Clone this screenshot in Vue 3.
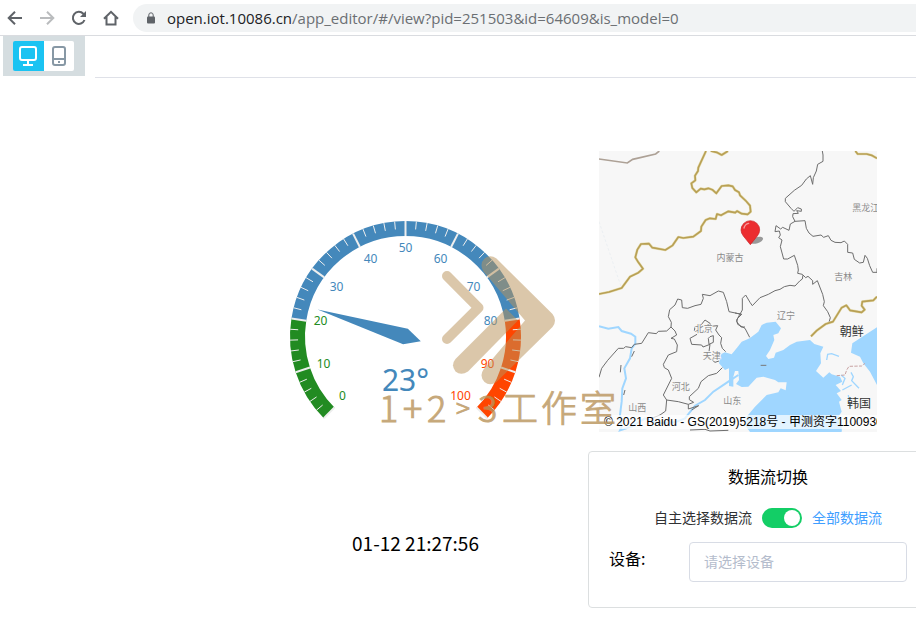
<script setup>
import { ref } from 'vue'

const device = ref('')
const allStreams = ref(true)
const mode = ref('desktop')

const R = 115.5
const polar = (value, radius) => {
  const a = ((225 - value * 2.7) * Math.PI) / 180
  return [Math.cos(a) * radius, -Math.sin(a) * radius]
}
const bandPath = (from, to) => {
  const r = R - 7.5
  const [x1, y1] = polar(from, r)
  const [x2, y2] = polar(to, r)
  return `M${x1} ${y1}A${r} ${r} 0 ${(to - from) * 2.7 > 180 ? 1 : 0} 1 ${x2} ${y2}`
}
const bands = [
  { color: '#228b22', d: bandPath(0, 20) },
  { color: '#4488bb', d: bandPath(20, 80) },
  { color: '#ff4500', d: bandPath(80, 100) },
]
const ticks = Array.from({ length: 51 }, (_, i) => {
  const major = i % 5 === 0
  const [x1, y1] = polar(i * 2, R)
  const [x2, y2] = polar(i * 2, major ? R - 15 : R - 8)
  return { x1, y1, x2, y2, major }
})
const labels = [
  [0, -63, 63], [10, -82, 31], [20, -85, -12], [30, -69, -46],
  [40, -35, -74], [50, 0, -85], [60, 35, -74], [70, 68, -46],
  [80, 85, -12], [90, 82, 31], [100, 55, 63],
].map(([v, x, y]) => ({ v, x, y, color: v <= 20 ? '#228b22' : v <= 80 ? '#4488bb' : '#ff4500' }))

const value = 23
const needle = [polar(value, 92), polar(value + 100 / 3, 8), polar(value, -16), polar(value - 100 / 3, 8)]
  .map((p) => p.join(',')).join(' ')

const places = [
  ['内蒙古', 405, 348], ['黑龙江', 812, 198], ['吉林', 745, 404], ['北京', 326, 562],
  ['天津', 350, 643], ['河北', 257, 736], ['山西', 127, 797], ['山东', 412, 776], ['辽宁', 573, 522],
]
</script>

<template>
  <div class="page">
    <header class="browser">
      <button class="nav" aria-label="Back">
        <svg viewBox="0 0 16 16"><path d="M15 8H2M8 1.700L1.700 8L8 14.300" /></svg>
      </button>
      <button class="nav off" aria-label="Forward">
        <svg viewBox="0 0 16 16"><path d="M1 8H14M8 1.700L14.300 8L8 14.300" /></svg>
      </button>
      <button class="nav" aria-label="Reload">
        <svg viewBox="0 0 16 16"><path d="M13.500 10A6 6 0 1 1 12.300 3.800L14 5.500" /><path class="solid" d="M15 1V7H9Z" /></svg>
      </button>
      <button class="nav" aria-label="Home">
        <svg viewBox="0 0 16 16"><path d="M1 8.800L8 1.800L15 8.800M3.500 7V14.500H12.500V7" /></svg>
      </button>
      <div class="address">
        <svg class="lock" viewBox="0 0 10 12"><rect x="1" y="4.500" width="8" height="7" rx="1" /><path d="M2.800 5V3A2.200 2.200 0 0 1 7.200 3V5" /></svg>
        <span class="url"><b>open.iot.10086.cn</b>/app_editor/#/view?pid=251503&amp;id=64609&amp;is_model=0</span>
      </div>
    </header>

    <div class="toolbar">
      <div class="modes">
        <button class="mode" :class="{ active: mode === 'desktop' }" aria-label="Desktop" @click="mode = 'desktop'">
          <svg viewBox="0 0 20 22"><rect x="2" y="2" width="16" height="13" rx="2" /><path d="M10 15V20M5 20H15" /></svg>
        </button>
        <button class="mode" :class="{ active: mode === 'mobile' }" aria-label="Mobile" @click="mode = 'mobile'">
          <svg viewBox="0 0 20 22"><rect x="4" y="2" width="12" height="18" rx="2" /><path d="M4 14H16M9 17H11" /></svg>
        </button>
      </div>
      <div class="rule"></div>
    </div>

    <main class="canvas">
      <section class="left">
        <div class="gauge">
          <svg class="dial" viewBox="-115.500 -115.500 231 200">
            <path v-for="b in bands" :key="b.color" :d="b.d" :stroke="b.color" fill="none" stroke-width="15" />
            <line v-for="(t, i) in ticks" :key="i" :x1="t.x1" :y1="t.y1" :x2="t.x2" :y2="t.y2" stroke="#eeeeee" :stroke-width="t.major ? 2 : 1" />
            <text v-for="l in labels" :key="l.v" class="scale" :x="l.x" :y="l.y" :fill="l.color">{{ l.v }}</text>
            <polygon :points="needle" fill="#4488bb" />
            <text class="reading" x="0" y="54">{{ value }}°</text>
          </svg>
          <svg class="watermark" viewBox="375 250 250 185">
            <g opacity="0.51" fill="#b9935a" stroke="#b9935a">
              <path d="M447 276L478.500 307.700L447 339" fill="none" stroke-width="10" stroke-linecap="round" stroke-linejoin="round" />
              <path stroke="none" d="M496.500 258.500L552.500 314Q557.500 320.500 552.500 327L496.500 382Q490 386.500 484.500 382Q479 376 483.500 369.500L525 320.500L483.500 271.500Q479 264 484.500 258.500Q490 254 496.500 258.500Z" />
              <path stroke="none" d="M455.500 359L506 308.500L518 320.500L468 371.500Q461 376 455.500 371.500Q450.500 365 455.500 359Z" />
            </g>
            <text class="mark" x="379" y="422">1<tspan x="403">+</tspan><tspan x="427">2</tspan><tspan x="456" y="418" class="small">&gt;</tspan><tspan x="478" y="422">3</tspan><tspan x="502 541 580">工作室</tspan></text>
          </svg>
        </div>
        <time class="clock">01-12 21:27:56</time>
      </section>

      <section class="right">
        <div class="map">
          <svg viewBox="12 18 834 843">
            <rect x="12" y="18" width="834" height="843" fill="#f7f7f7" />
            <path d="M12 230L80 430" stroke="#e6ebf0" stroke-width="2" stroke-dasharray="8 6" />
            <g transform="translate(420 420)" fill="#9fd6ff">
              <path d="M-48 235L-43 208L-30 202L-10 208L6 188L20 170L44 160L70 140L80 120L95 113L122 110L138 130L130 145L115 150L118 165L105 195L93 213L100 222L117 218L122 203L145 195L165 180L185 170L225 165L238 177L265 185L256 205L258 235L243 258L265 278L283 262L290 268L315 275L322 290L302 300L318 318L305 325L320 345L312 350L320 380L312 392L320 441H45L30 420L35 395L60 365L95 330L130 322L137 310L152 316L155 292L130 292L120 285L85 275L65 278L40 305L20 306L3 297L12 285L10 258L0 258L-5 275V305L-18 303V250L-30 255Z" />
              <path d="M352 175L426 127V300L405 260L385 235L375 215L348 203Z" />
              <path d="M275 225L278 208L290 206L312 214M322 315L350 300M348 262L355 275L350 287L372 310M318 270L330 280L322 300M340 330L345 365" fill="none" stroke="#9fd6ff" stroke-width="4" />
              <path d="M60 429H90M150 430H320" stroke="#9fd6ff" stroke-width="18" />
              <path d="M77 241H94" stroke="#777" stroke-width="3" />
              <path d="M305 272L330 270L335 255L342 244L380 243L390 235" fill="none" stroke="#c9a3a3" stroke-width="3" stroke-dasharray="10 4" />
            </g>
            <path d="M12 544L40 551L70 546L80 558L108 566L121 575L121 596L110 610L105 640L88 670L93 700L82 730L80 770L75 810L80 845L75 856L110 845L150 820L190 835L240 832L270 820L300 782L330 765L355 740L400 710L430 690" fill="none" stroke="#9fd6ff" stroke-width="6" />
            <g fill="none" stroke="#6e6e6e" stroke-width="3" stroke-linejoin="round">
              <g transform="translate(420 0)">
                <path d="M262 18L264 30L264 49L248 58L244 78L235 98L233 118L226 92L214 102L200 121L178 136L151 160L151 170L168 190L177 199L188 188L199 192L199 199L185 197L190 205L174 206L173 215L180 229L210 227L214 250L222 264L234 274L258 270L266 277L280 272L288 286L300 292L318 293L328 288L338 298L338 322L353 324L358 343L374 354L385 352L390 331L397 340L404 362L413 382L426 382V370" />
                <path d="M180 229L166 237L162 256L143 247L137 252L123 242L120 260L133 258L136 270L131 278L141 285L136 305L146 342L158 342L178 331L188 361L190 375L188 385L202 388L212 398L219 394L233 407L233 418L247 407L263 448L268 470L265 482L278 500L286 518L282 532" />
                <path d="M204 390L202 402L194 408L180 423L165 421L148 425L135 433L120 437L100 448L75 458L52 482L45 472L32 450L22 460L22 495L5 525L8 538L30 550L44 577M20 508L0 504" />
              </g>
              <g transform="translate(0 420)">
                <path d="M12 277L20 250L38 226L70 190L86 190L92 185L110 188L118 178L140 175L160 143L184 146L190 139L215 138L228 126L240 138L245 150L228 160L238 162L247 180L245 200L220 210L205 238L208 248L220 255L230 280L205 330L215 345L250 350L280 358L296 352L283 344L283 335L310 310L318 290L340 272L365 265L382 248" />
                <path d="M228 126L229 112L220 95L224 74L240 60L248 42L260 45L262 68L278 70L300 62L318 58L325 40L322 28L345 32L370 18L385 22L395 50L402 80L440 88L428 100L425 110L438 126L450 126" />
                <path d="M215 345L212 378L195 390L170 400M285 435L330 433L345 438L400 436M118 198L110 215M90 315L86 330M78 240L76 262M280 358V372L311 362L290 375M300 125L298 138" />
                <path d="M318 120L330 105L345 115L346 124L368 122L362 135L372 150L380 158L377 175L382 190L392 200M345 155L355 152L355 172L342 178L340 160ZM306 148L285 160L290 178L320 180L324 186L345 178L342 200L332 210L348 222L360 232L372 228" />
              </g>
            </g>
            <path d="M12 42L97 54L113 43L182 27L193 18" fill="none" stroke="#ada196" stroke-width="5" />
            <g fill="none" stroke="#e6dcae" stroke-width="8" stroke-linejoin="round">
              <path v-for="k in 2" :key="k" :class="{ core: k === 2 }" d="M333 18L310 68L309 78L300 92L301 106L289 115L292 129L304 142L317 131L328 133L340 130L352 134L364 145L380 123L400 121L413 124L420 135L432 142L435 151L453 168L465 182L467 200L458 208L440 206L426 198L421 203L400 199L378 211L366 207L362 222L345 220L332 225L319 245L318 258L295 275L265 279L250 276L233 301L211 315L172 308L162 296L138 297L127 314L121 337L130 352L144 371L130 383L105 395L80 429L42 441L12 447M347 18L365 22L380 30L399 18M781 18L788 27L815 27L830 31L846 40M648 574L665 557L692 537L714 530L740 488L754 481L765 496L800 502L809 494L800 482L802 470L835 466L846 455" />
            </g>
            <text v-for="[name, x, y] in places" :key="name" class="place" :x="x" :y="y">{{ name }}</text>
            <text class="country" x="770" y="573">朝鲜</text>
            <text class="country" x="792" y="789">韩国</text>
            <ellipse cx="485" cy="286" rx="20" ry="9" fill="#999" transform="rotate(-18 485 286)" />
            <path d="M466 299L445 273Q438 264 438 255A28 28 0 0 1 494 255Q494 264 487 273Z" fill="#ec2d30" stroke="#c92327" stroke-width="2" />
            <path d="M447 249Q450 237 461 235" fill="none" stroke="#f79a9b" stroke-width="4" stroke-linecap="round" />
          </svg>
          <div class="copyright">© 2021 Baidu - GS(2019)5218号 - 甲测资字1100930</div>
        </div>

        <form class="panel" @submit.prevent>
          <h2 class="title">数据流切换</h2>
          <div class="switch-row">
            <label for="streams">自主选择数据流</label>
            <input id="streams" v-model="allStreams" class="switch" type="checkbox" />
            <label for="streams" class="on">全部数据流</label>
          </div>
          <div class="field">
            <label for="device">设备:</label>
            <input id="device" v-model="device" type="text" placeholder="请选择设备" />
          </div>
        </form>
      </section>
    </main>
  </div>
</template>

<style>
body {
  background: #fff;
}
</style>

<style scoped>
.page {
  min-height: 100vh;
  overflow: hidden;
  font-family: "Noto Sans", "Noto Sans CJK SC", sans-serif;
  color: #000;
}
button {
  padding: 0;
  border: 0;
  background: none;
}
.browser {
  display: flex;
  align-items: center;
  gap: 16px;
  height: 35px;
  padding-left: 7px;
  border-bottom: 1px solid #dadce0;
}
.nav {
  display: flex;
  width: 16px;
  height: 16px;
}
.nav svg {
  width: 16px;
  height: 16px;
  fill: none;
  stroke: #5f6368;
  stroke-width: 2;
}
.nav.off svg {
  stroke: #babcbe;
}
.nav .solid {
  fill: #5f6368;
  stroke: none;
}
.address {
  display: flex;
  flex: 1;
  align-items: center;
  gap: 11px;
  height: 28px;
  margin-left: -2px;
  padding-left: 13px;
  border-radius: 14px 0 0 14px;
  background: #f1f3f4;
}
.lock {
  width: 10px;
  height: 12px;
  fill: #5f6368;
}
.lock path {
  fill: none;
  stroke: #5f6368;
}
.url {
  overflow: hidden;
  white-space: nowrap;
  font-family: "Open Sans", "Noto Sans", sans-serif;
  font-size: 15px;
  line-height: 20px;
  color: #6b6f73;
}
.url b {
  font-weight: 400;
  color: #202124;
}
.toolbar {
  display: flex;
  gap: 10px;
  height: 42px;
  padding-left: 3px;
}
.modes {
  display: flex;
  box-sizing: border-box;
  width: 82px;
  height: 40px;
  padding: 5px 11px 5px 10px;
  background: #d5dde0;
}
.mode {
  display: flex;
  flex: 1;
  align-items: center;
  justify-content: center;
  background: #fff;
  border-radius: 0 2px 2px 0;
}
.mode svg {
  width: 20px;
  height: 22px;
  fill: none;
  stroke: #8798a5;
  stroke-width: 2;
}
.mode.active {
  background: #1ac3f2;
  border-radius: 2px 0 0 2px;
}
.mode.active svg {
  stroke: #fff;
}
.rule {
  flex: 1;
  box-sizing: border-box;
  border-bottom: 1px solid #dfe1e8;
}
.canvas {
  display: grid;
  grid-template-columns: minmax(0, 1fr) 328px;
}
.left {
  display: flex;
  flex-direction: column;
  align-items: flex-end;
  padding: 143px 67px 0 0;
}
.gauge {
  position: relative;
  width: 231px;
}
.dial {
  display: block;
  width: 231px;
  height: 200px;
  overflow: visible;
}
.scale {
  font-size: 12px;
  text-anchor: middle;
}
.reading {
  font-size: 30px;
  text-anchor: middle;
  fill: #4488bb;
}
.watermark {
  position: absolute;
  z-index: 2;
  top: 29px;
  left: 85px;
  width: 250px;
  height: 185px;
  pointer-events: none;
}
.mark {
  font-family: "Noto Sans CJK SC", sans-serif;
  font-size: 36px;
  font-weight: 300;
  fill: #b9935a;
  stroke: #b9935a;
  stroke-width: 1px;
  opacity: 0.8;
}
.mark .small {
  font-size: 26px;
}
.clock {
  width: 211px;
  margin-top: 110px;
  font-family: "Noto Sans CJK SC", sans-serif;
  font-size: 19px;
  line-height: 24px;
  text-align: center;
}
.right {
  padding-top: 73px;
}
.map {
  position: relative;
  width: 278px;
  margin-left: 11px;
  overflow: hidden;
}
.map svg {
  display: block;
  width: 278px;
  height: 281px;
}
.core {
  stroke: #b8a055;
  stroke-width: 5;
}
.place {
  font-family: "Noto Sans CJK SC", sans-serif;
  font-size: 27px;
  text-anchor: middle;
  fill: #8a8a8a;
  stroke: #f7f7f7;
  stroke-width: 4;
  paint-order: stroke;
}
.country {
  font-family: "Noto Sans CJK SC", sans-serif;
  font-size: 36px;
  text-anchor: middle;
  fill: #333;
}
.copyright {
  position: absolute;
  right: 0;
  bottom: 3px;
  left: 0;
  padding-left: 5px;
  overflow: hidden;
  white-space: nowrap;
  font-family: "Liberation Sans", "Noto Sans CJK SC", sans-serif;
  font-size: 12px;
  line-height: 14px;
  background: rgba(255, 255, 255, 0.7);
}
.panel {
  box-sizing: border-box;
  width: 360px;
  margin-top: 19px;
  padding: 12px 20px 25px;
  border: 1px solid #dcdfe0;
  border-radius: 4px;
  font-family: "Noto Sans CJK SC", sans-serif;
}
.title {
  margin: 0 0 20px;
  font-size: 16px;
  font-weight: 400;
  line-height: 24px;
  text-align: center;
}
.switch-row {
  display: flex;
  align-items: flex-start;
  justify-content: center;
  gap: 10px;
  height: 20px;
  margin-bottom: 14px;
  font-size: 14px;
  line-height: 18px;
  color: #303133;
}
.switch {
  appearance: none;
  box-sizing: border-box;
  display: flex;
  width: 40px;
  height: 20px;
  margin: 0;
  padding: 2px;
  border-radius: 10px;
  background: #c0ccda;
}
.switch::before {
  content: "";
  width: 16px;
  height: 16px;
  border-radius: 50%;
  background: #fff;
}
.switch:checked {
  justify-content: flex-end;
  background: #13ce66;
}
.on {
  color: #409eff;
}
.field {
  display: flex;
}
.field label {
  width: 80px;
  font-size: 16px;
  line-height: 32px;
}
.field input {
  box-sizing: border-box;
  width: 218px;
  height: 40px;
  padding: 0 14px 2px;
  border: 1px solid #d8dce5;
  border-radius: 4px;
  font: inherit;
  font-size: 14px;
}
.field input::placeholder {
  color: #b4bccc;
}
</style>
